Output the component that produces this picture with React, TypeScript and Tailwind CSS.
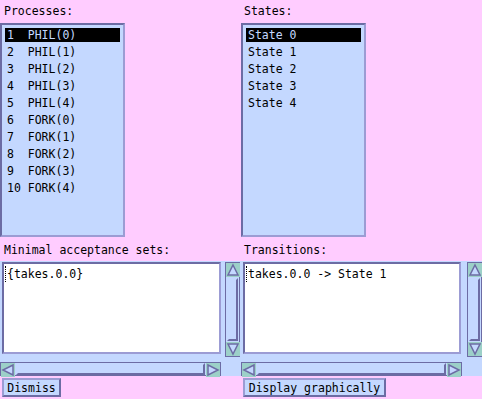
const processes = ["1  PHIL(0)", "2  PHIL(1)", "3  PHIL(2)", "4  PHIL(3)", "5  PHIL(4)", "6  FORK(0)", "7  FORK(1)", "8  FORK(2)", "9  FORK(3)", "10 FORK(4)"];
const states = ["State 0", "State 1", "State 2", "State 3", "State 4"];

const font = { fontFamily: '"DejaVu Sans Mono", "Liberation Mono", monospace' };

function ListBox({ items, selected }: { items: string[]; selected: number }) {
    return (
        <div className="w-[125px] h-[214px] bg-[#c4d8ff] border-2 border-t-[#6c6ca4] border-l-[#6c6ca4] border-r-[#9c9cd4] border-b-[#9c9cd4] px-[3px] pt-[3px]">
            {items.map((it, i) => (
                <div
                    key={it}
                    className={`h-[14px] mb-[3px] pl-[2px] leading-[14px] whitespace-pre ${i === selected ? "bg-black text-[#c4d8ff]" : "text-black"}`}
                >
                    {it}
                </div>
            ))}
        </div>
    );
}

function Arrow({ dir }: { dir: "up" | "down" | "left" | "right" }) {
    const pts = {
        up: "7,2 12,12 2,12",
        down: "2,2 12,2 7,12",
        left: "2,7 12,2 12,12",
        right: "2,2 12,7 2,12",
    }[dir];
    return (
        <svg width="14" height="14" viewBox="0 0 14 14" className="block shrink-0">
            <rect x="0" y="0" width="14" height="14" fill="#9cd0c8" />
            <polygon points={pts} fill="#c4d8ff" stroke="#6c6ca4" strokeWidth="1.5" />
        </svg>
    );
}

function VScroll() {
    return (
        <div className="w-[15px] h-[95px] border border-[#6c6ca4] bg-[#c4d8ff] flex flex-col">
            <Arrow dir="up" />
            <div className="flex-1 mx-[1px] my-[1px] border-2 border-t-[#c4d8ff] border-l-[#c4d8ff] border-r-[#6c6ca4] border-b-[#6c6ca4] bg-[#c4d8ff]" />
            <Arrow dir="down" />
        </div>
    );
}

function HScroll() {
    return (
        <div className="w-[221px] h-[14px] border border-[#6c6ca4] bg-[#c4d8ff] flex flex-row">
            <Arrow dir="left" />
            <div className="flex-1 my-[0px] mx-[1px] border-2 border-t-[#c4d8ff] border-l-[#c4d8ff] border-r-[#6c6ca4] border-b-[#6c6ca4] bg-[#c4d8ff]" />
            <Arrow dir="right" />
        </div>
    );
}

function TextBox({ text, w }: { text: string; w: string }) {
    return (
        <div className={`${w} h-[92px] bg-white border-2 border-t-[#6c6ca4] border-l-[#6c6ca4] border-r-[#9c9cd4] border-b-[#9c9cd4] pt-[2px] pl-[1px]`}>
            <div className="flex items-start leading-[16px]">
                <span className="w-[1px] h-[16px] border-l border-dotted border-black mr-[1px]" />
                <span className="text-black whitespace-pre">{text}</span>
            </div>
        </div>
    );
}

function Button({ label, w }: { label: string; w: string }) {
    return (
        <div className={`${w} h-[19px] bg-[#c4d8ff] border-2 border-t-[#9c9cd4] border-l-[#9c9cd4] border-r-[#6c6ca4] border-b-[#6c6ca4] flex items-center justify-center text-black leading-[14px]`}>
            {label}
        </div>
    );
}

export default function App() {
    return (
        <div className="w-[482px] h-[399px] bg-[#ffccff] text-[11.5px] overflow-hidden" style={font}>
            <div className="flex flex-row">
                <div className="w-[241px]">
                    <div className="h-[23px] pl-[4px] pt-[4px] leading-[14px]">Processes:</div>
                    <ListBox items={processes} selected={0} />
                </div>
                <div className="w-[241px]">
                    <div className="h-[23px] pl-[3px] pt-[4px] leading-[14px]">States:</div>
                    <ListBox items={states} selected={0} />
                </div>
            </div>
            <div className="flex flex-row h-[24px]">
                <div className="w-[241px] pl-[4px] pt-[6px] leading-[14px]">Minimal acceptance sets:</div>
                <div className="w-[241px] pl-[3px] pt-[6px] leading-[14px]">Transitions:</div>
            </div>
            <div className="h-[115px] bg-[#c4d8ff] flex flex-row pt-[1px]">
                <div className="w-[241px] flex flex-row">
                    <div className="flex flex-col">
                        <div className="pl-[2px]">
                            <TextBox text="{takes.0.0}" w="w-[219px]" />
                        </div>
                        <div className="mt-[8px]">
                            <HScroll />
                        </div>
                    </div>
                    <div className="ml-[4px]">
                        <VScroll />
                    </div>
                </div>
                <div className="w-[241px] flex flex-row">
                    <div className="flex flex-col">
                        <div className="pl-[2px]">
                            <TextBox text="takes.0.0 -> State 1" w="w-[218px]" />
                        </div>
                        <div className="mt-[8px]">
                            <HScroll />
                        </div>
                    </div>
                    <div className="ml-[5px]">
                        <VScroll />
                    </div>
                </div>
            </div>
            <div className="flex flex-row pt-[2px]">
                <div className="w-[241px] pl-[2px]">
                    <Button label="Dismiss" w="w-[59px]" />
                </div>
                <div className="w-[241px] pl-[2px]">
                    <Button label="Display graphically" w="w-[143px]" />
                </div>
            </div>
        </div>
    );
}
